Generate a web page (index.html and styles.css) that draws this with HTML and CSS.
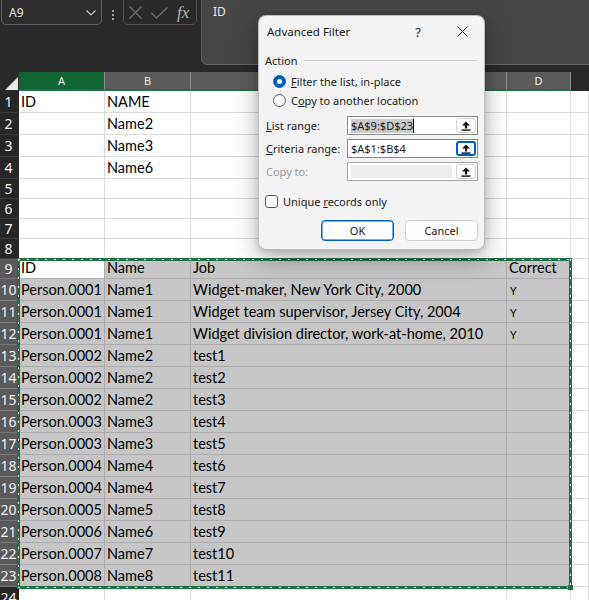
FILE: index.html
```html
<!DOCTYPE html>
<html>
<head>
<meta charset="utf-8">
<link rel="stylesheet" href="styles.css">
</head>
<body>
<div class="app">
  <div class="fbar">
    <div class="namebox">
      <span class="nb-text">A9</span>
      <svg class="chev" width="10" height="6" viewBox="0 0 10 6"><path d="M0.5 0.5 L5 5 L9.5 0.5" fill="none" stroke="#c8c8c8" stroke-width="1.1"/></svg>
    </div>
    <div class="vdots"><i></i><i></i><i></i></div>
    <div class="fbtns">
      <svg class="fx-x" width="13" height="13" viewBox="0 0 13 13"><path d="M0.5 0.5 L12.5 12.5 M12.5 0.5 L0.5 12.5" stroke="#6e6e6e" stroke-width="1.2"/></svg>
      <svg class="fx-ok" width="17" height="12" viewBox="0 0 17 12"><path d="M0.5 6 L5.5 11 L16.5 0.5" fill="none" stroke="#6e6e6e" stroke-width="1.2"/></svg>
      <span class="fx">fx</span>
    </div>
    <div class="finput">ID</div>
  </div>

  <div class="sheet">
    <div class="row hdr">
      <div class="corner"><svg width="13" height="13" viewBox="0 0 13 13"><polygon points="13,0 13,13 0,13" fill="#e6e6e6"/></svg></div>
      <div class="ch act">A</div>
      <div class="ch">B</div>
      <div class="ch">C</div>
      <div class="ch">D</div>
      <div class="ch e"></div>
    </div>
    <div class="row h22"><div class="rh">1</div><div class="c">ID</div><div class="c">NAME</div><div class="c"></div><div class="c"></div><div class="c e"></div></div>
    <div class="row h22"><div class="rh">2</div><div class="c"></div><div class="c">Name2</div><div class="c"></div><div class="c"></div><div class="c e"></div></div>
    <div class="row h22"><div class="rh">3</div><div class="c"></div><div class="c">Name3</div><div class="c"></div><div class="c"></div><div class="c e"></div></div>
    <div class="row h22"><div class="rh">4</div><div class="c"></div><div class="c">Name6</div><div class="c"></div><div class="c"></div><div class="c e"></div></div>
    <div class="row h20"><div class="rh">5</div><div class="c"></div><div class="c"></div><div class="c"></div><div class="c"></div><div class="c e"></div></div>
    <div class="row h20"><div class="rh">6</div><div class="c"></div><div class="c"></div><div class="c"></div><div class="c"></div><div class="c e"></div></div>
    <div class="row h20"><div class="rh">7</div><div class="c"></div><div class="c"></div><div class="c"></div><div class="c"></div><div class="c e"></div></div>
    <div class="row h20"><div class="rh">8</div><div class="c"></div><div class="c"></div><div class="c"></div><div class="c"></div><div class="c e"></div></div>
    <div class="row h20 s"><div class="rh">9</div><div class="c act">ID</div><div class="c">Name</div><div class="c">Job</div><div class="c">Correct</div><div class="c e"></div></div>
    <div class="row h22 s"><div class="rh">10</div><div class="c">Person.0001</div><div class="c">Name1</div><div class="c">Widget-maker, New York City, 2000</div><div class="c"><span class="sm">Y</span></div><div class="c e"></div></div>
    <div class="row h22 s"><div class="rh">11</div><div class="c">Person.0001</div><div class="c">Name1</div><div class="c">Widget team supervisor, Jersey City, 2004</div><div class="c"><span class="sm">Y</span></div><div class="c e"></div></div>
    <div class="row h22 s"><div class="rh">12</div><div class="c">Person.0001</div><div class="c">Name1</div><div class="c">Widget division director, work-at-home, 2010</div><div class="c"><span class="sm">Y</span></div><div class="c e"></div></div>
    <div class="row h22 s"><div class="rh">13</div><div class="c">Person.0002</div><div class="c">Name2</div><div class="c">test1</div><div class="c"></div><div class="c e"></div></div>
    <div class="row h22 s"><div class="rh">14</div><div class="c">Person.0002</div><div class="c">Name2</div><div class="c">test2</div><div class="c"></div><div class="c e"></div></div>
    <div class="row h22 s"><div class="rh">15</div><div class="c">Person.0002</div><div class="c">Name2</div><div class="c">test3</div><div class="c"></div><div class="c e"></div></div>
    <div class="row h22 s"><div class="rh">16</div><div class="c">Person.0003</div><div class="c">Name3</div><div class="c">test4</div><div class="c"></div><div class="c e"></div></div>
    <div class="row h22 s"><div class="rh">17</div><div class="c">Person.0003</div><div class="c">Name3</div><div class="c">test5</div><div class="c"></div><div class="c e"></div></div>
    <div class="row h22 s"><div class="rh">18</div><div class="c">Person.0004</div><div class="c">Name4</div><div class="c">test6</div><div class="c"></div><div class="c e"></div></div>
    <div class="row h22 s"><div class="rh">19</div><div class="c">Person.0004</div><div class="c">Name4</div><div class="c">test7</div><div class="c"></div><div class="c e"></div></div>
    <div class="row h22 s"><div class="rh">20</div><div class="c">Person.0005</div><div class="c">Name5</div><div class="c">test8</div><div class="c"></div><div class="c e"></div></div>
    <div class="row h22 s"><div class="rh">21</div><div class="c">Person.0006</div><div class="c">Name6</div><div class="c">test9</div><div class="c"></div><div class="c e"></div></div>
    <div class="row h22 s"><div class="rh">22</div><div class="c">Person.0007</div><div class="c">Name7</div><div class="c">test10</div><div class="c"></div><div class="c e"></div></div>
    <div class="row h22 s"><div class="rh">23</div><div class="c">Person.0008</div><div class="c">Name8</div><div class="c">test11</div><div class="c"></div><div class="c e"></div></div>
    <div class="row h22"><div class="rh">24</div><div class="c"></div><div class="c"></div><div class="c"></div><div class="c"></div><div class="c e"></div></div>
  </div>

  <div class="ants"><span class="handle"></span></div>

  <div class="dlg">
    <div class="tb">
      <span class="tt">Advanced Filter</span>
      <span class="tb-help">?</span>
      <span class="tb-close"><svg width="11" height="11" viewBox="0 0 11 11"><path d="M0.5 0.5 L10.5 10.5 M10.5 0.5 L0.5 10.5" stroke="#1b1b1b" stroke-width="1"/></svg></span>
    </div>
    <div class="db">
      <div class="legend"><span>Action</span><span class="gl"></span></div>
      <div class="opt first"><span class="radio on"></span><span><u>F</u>ilter the list, in-place</span></div>
      <div class="opt"><span class="radio"></span><span>C<u>o</u>py to another location</span></div>

      <div class="range first">
        <span class="lbl"><u>L</u>ist range:</span>
        <div class="inp"><span class="seltext">$A$9:$D$23</span><span class="caret"></span>
          <span class="rb"><svg width="10" height="10" viewBox="0 0 10 10"><path d="M5 0.5 L9 4.6 H6.1 V7.6 H3.9 V4.6 H1 Z" fill="#111"/><rect x="0.5" y="8.4" width="9" height="1.4" fill="#111"/></svg></span>
        </div>
      </div>
      <div class="range">
        <span class="lbl"><u>C</u>riteria range:</span>
        <div class="inp"><span>$A$1:$B$4</span>
          <span class="rb focus"><svg width="10" height="10" viewBox="0 0 10 10"><path d="M5 0.5 L9 4.6 H6.1 V7.6 H3.9 V4.6 H1 Z" fill="#111"/><rect x="0.5" y="8.4" width="9" height="1.4" fill="#111"/></svg></span>
        </div>
      </div>
      <div class="range dis">
        <span class="lbl">Copy to:</span>
        <div class="inp"><span class="fill"></span>
          <span class="rb"><svg width="10" height="10" viewBox="0 0 10 10"><path d="M5 0.5 L9 4.6 H6.1 V7.6 H3.9 V4.6 H1 Z" fill="#111"/><rect x="0.5" y="8.4" width="9" height="1.4" fill="#111"/></svg></span>
        </div>
      </div>

      <div class="chk"><span class="box"></span><span>Unique <u>r</u>ecords only</span></div>

      <div class="btns"><span class="btn ok">OK</span><span class="btn">Cancel</span></div>
    </div>
  </div>
</div>
</body>
</html>
```

FILE: styles.css
```css
* { box-sizing: border-box; }
body { margin: 0; background: #fff; }

.app {
  position: relative;
  width: 589px;
  height: 600px;
  overflow: hidden;
  background: #292929;
  font-family: "Noto Sans", sans-serif;
}

/* formula bar */
.fbar {
  height: 72px;
  display: flex;
  align-items: flex-start;
}
.namebox {
  margin-top: -6px;
  margin-left: 1px;
  width: 101px;
  height: 31px;
  border: 1px solid #5d5d5d;
  border-radius: 5px;
  background: #2d2d2d;
  display: flex;
  align-items: center;
  padding: 6px 5px 0 7px;
  color: #e6e6e6;
  font-size: 12px;
}
.nb-text { flex: 1; }
.vdots {
  display: flex;
  flex-direction: column;
  gap: 2px;
  margin: 10px 9px 0 10px;
}
.vdots i { display: block; width: 2px; height: 2px; background: #a0a0a0; }
.fbtns {
  margin-top: -6px;
  width: 74px;
  height: 31px;
  border: 1px solid #4f4f4f;
  border-radius: 5px;
  display: flex;
  align-items: center;
  padding: 6px 0 0 5px;
}
.fx-x { margin-right: 9px; }
.fx-ok { margin-right: 9px; }
.fx {
  font-family: "Liberation Serif", serif;
  font-style: italic;
  font-size: 17px;
  color: #b4b4b4;
  line-height: 1;
}
.finput {
  margin-top: -6px;
  margin-left: 4px;
  margin-right: -10px;
  flex: 1;
  height: 71px;
  border: 1px solid #626262;
  border-radius: 6px;
  background: #464646;
  color: #eaeaea;
  font-size: 12px;
  line-height: 16px;
  padding: 9px 0 0 11px;
}

/* sheet */
.sheet { background: #fff; }
.row {
  display: grid;
  grid-template-columns: 19px 86px 86px 316px 64px 1fr;
}
.hdr { height: 19px; background: #292929; }
.h22 { height: 22px; }
.h20 { height: 20px; }

.corner {
  background: #292929;
  display: flex;
  align-items: flex-end;
  justify-content: flex-end;
  padding: 0 1px 1px 0;
}
.ch {
  background: #5b5b5b;
  color: #ececec;
  font-size: 11px;
  line-height: 17px;
  text-align: center;
  border-right: 1px solid #8c8c8c;
  border-bottom: 2px solid #1f7145;
}
.ch.act { background: #0f6534; }
.ch.e { background: #292929; border: 0; }

.c {
  background: #fff;
  border-right: 1px solid #dadada;
  border-bottom: 1px solid #dadada;
  padding: 0 0 2px 2px;
  display: flex;
  align-items: flex-end;
  font-family: Lato, sans-serif;
  font-size: 14.5px;
  line-height: 17px;
  color: #000;
  white-space: nowrap;
  overflow: hidden;
}
.sm { font-size: 10.5px; line-height: 13px; padding-left: 1px; }
.rh {
  background: #262626;
  color: #f2f2f2;
  font-size: 14px;
  line-height: 1;
  border-bottom: 1px solid #3c3c3c;
  display: flex;
  align-items: center;
  justify-content: center;
  padding-right: 2px;
  overflow: hidden;
}
.s .rh { background: #5a5a5a; border-bottom-color: #7a7a7a; }
.s .c { background: #c6c6c6; border-color: #ababab; }
.s .c.act { background: #fff; }
.s .c.e { background: #fff; border-color: #dadada; }

/* marching ants around the copied range */
.ants {
  position: absolute;
  left: 17px;
  top: 258px;
  width: 555px;
  height: 331px;
  border: 3px solid #1e7145;
  pointer-events: none;
}
.ants::before {
  content: "";
  position: absolute;
  inset: -2px;
  background:
    repeating-linear-gradient(90deg, #fff 0 2px, transparent 2px 9px) left top / 100% 1px no-repeat,
    repeating-linear-gradient(90deg, #fff 0 2px, transparent 2px 9px) left bottom / 100% 1px no-repeat,
    repeating-linear-gradient(180deg, #fff 0 2px, transparent 2px 9px) left top / 1px 100% no-repeat,
    repeating-linear-gradient(180deg, #fff 0 2px, transparent 2px 9px) right top / 1px 100% no-repeat;
}
.handle {
  position: absolute;
  right: -4px;
  bottom: -4px;
  width: 5px;
  height: 5px;
  background: #1e7145;
}

/* dialog */
.dlg {
  position: absolute;
  left: 258px;
  top: 15px;
  width: 227px;
  height: 235px;
  border: 1px solid rgba(0, 0, 0, 0.22);
  border-radius: 8px;
  background: #f3f3f3;
  box-shadow: 0 8px 26px rgba(0, 0, 0, 0.32), 0 2px 6px rgba(0, 0, 0, 0.12);
  color: #1b1b1b;
  font-size: 11px;
}
.tb {
  height: 31px;
  display: flex;
  align-items: center;
  padding-left: 8px;
}
.tt { flex: 1; font-size: 11.5px; }
.tb-help {
  width: 44px;
  text-align: center;
  font-size: 13px;
}
.tb-close {
  width: 44px;
  display: flex;
  justify-content: center;
}
.db { padding: 0 6px; }
.legend {
  margin-top: 5px;
  height: 16px;
  display: flex;
  align-items: center;
  gap: 6px;
}
.gl { flex: 1; height: 1px; background: #d3d3d3; }
.opt {
  height: 19px;
  display: flex;
  align-items: center;
  gap: 5px;
  padding-left: 8px;
}
.opt.first { margin-top: 4px; }
.radio {
  width: 13px;
  height: 13px;
  border-radius: 50%;
  border: 1px solid #5c5c5c;
  background: #fafafa;
  display: flex;
  align-items: center;
  justify-content: center;
}
.radio.on { background: #005fb8; border-color: #005fb8; }
.radio.on::after {
  content: "";
  width: 5px;
  height: 5px;
  border-radius: 50%;
  background: #fff;
}
.range {
  display: grid;
  grid-template-columns: 82px 1fr;
  align-items: center;
  height: 19px;
  margin-top: 4px;
}
.range.first { margin-top: 6px; }
.lbl { padding-left: 1px; }
.inp {
  height: 19px;
  border: 1px solid #8a8a8a;
  background: #fff;
  display: flex;
  align-items: center;
  padding-left: 3px;
  white-space: nowrap;
}
.seltext { background: #c9c9c9; line-height: 14px; }
.caret { width: 1px; height: 14px; background: #000; }
.rb {
  margin-left: auto;
  margin-right: 1px;
  width: 20px;
  height: 15px;
  border: 1px solid #d2d2d2;
  border-radius: 3px;
  background: #fdfdfd;
  display: flex;
  align-items: center;
  justify-content: center;
}
.rb.focus { border: 2px solid #005fb8; }
.dis .lbl { color: #9a9a9a; }
.dis .inp { border-color: #a6a6a6; }
.fill { width: 101px; height: 13px; background: #ececec; }
.chk {
  margin-top: 11px;
  height: 18px;
  display: flex;
  align-items: center;
  gap: 5px;
}
.box {
  width: 13px;
  height: 13px;
  border: 1px solid #5c5c5c;
  border-radius: 3px;
  background: #fafafa;
}
.btns {
  margin-top: 10px;
  display: flex;
  justify-content: flex-end;
  gap: 11px;
}
.btn {
  width: 73px;
  height: 21px;
  border: 1px solid #d0d0d0;
  border-radius: 4px;
  background: #fdfdfd;
  display: flex;
  align-items: center;
  justify-content: center;
}
.btn.ok { border-color: #005fb8; box-shadow: inset 0 0 0 0.5px #005fb8; }
```
